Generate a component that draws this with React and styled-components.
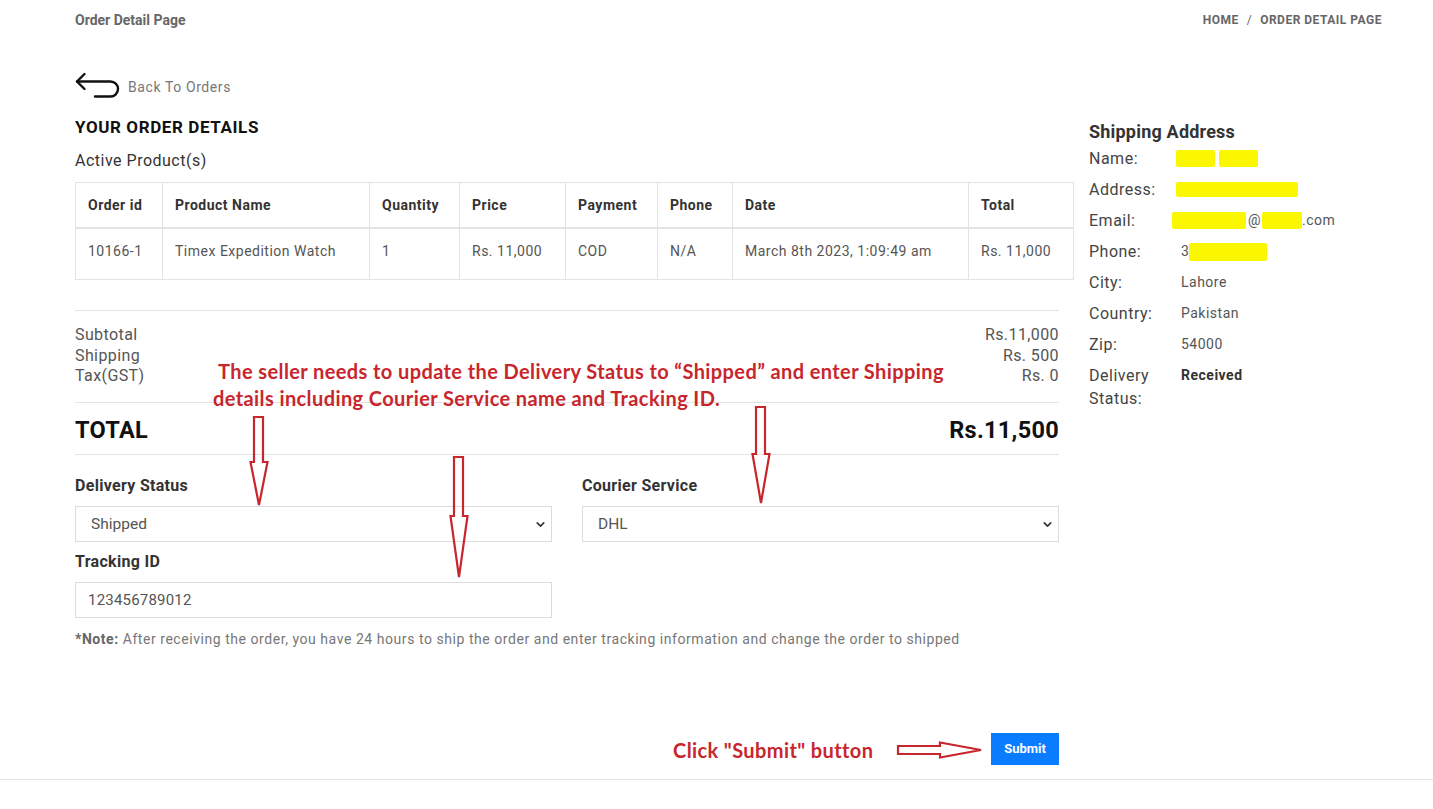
import React from "react";
import styled, { createGlobalStyle } from "styled-components";
import { ChevronDown } from "lucide-react";

const GlobalStyle = createGlobalStyle`
  body {
    margin: 0;
    background: #fff;
    font-family: Roboto, "Liberation Sans", Arial, sans-serif;
    color: #555;
  }
  * { box-sizing: border-box; }
`;

const Page = styled.div`
  position: relative;
  width: 1433px;
  min-height: 809px;
`;

const TopBar = styled.div`
  display: flex;
  justify-content: space-between;
  align-items: center;
  padding: 12px 51px 0 75px;
  height: 28px;
`;

const PageTitle = styled.div`
  font-size: 14px;
  font-weight: 700;
  color: #666;
`;

const Crumbs = styled.div`
  font-size: 12px;
  font-weight: 700;
  color: #666;
  letter-spacing: 0.5px;
  text-transform: uppercase;
  span { margin: 0 8px; font-weight: 400; }
`;

const Body = styled.div`
  padding: 0 0 0 75px;
  border-bottom: 1px solid #e2e2e2;
  padding-bottom: 14px;
`;

const BackLink = styled.a`
  display: flex;
  align-items: center;
  gap: 7px;
  margin-top: 44px;
  height: 27px;
  font-size: 14px;
  letter-spacing: 0.6px;
  color: #777;
  text-decoration: none;
  span { margin-top: 3px; }
`;

const Columns = styled.div`
  display: flex;
  gap: 30px;
  margin-top: 18px;
`;

const LeftCol = styled.div`
  width: 984px;
  display: flex;
  flex-direction: column;
`;

const RightCol = styled.div`
  width: 300px;
  padding-top: 4px;
`;

const Heading = styled.h2`
  margin: 0;
  font-size: 17px;
  line-height: 20px;
  font-weight: 700;
  color: #111;
  letter-spacing: 0.6px;
`;

const SubHeading = styled.div`
  margin-top: 14px;
  font-size: 16px;
  line-height: 20px;
  color: #333;
  letter-spacing: 0.5px;
`;

const Table = styled.table`
  margin-top: 11px;
  width: 998px;
  border-collapse: collapse;
  table-layout: fixed;
  font-size: 14px;

  th, td {
    border: 1px solid #e2e3e6;
    text-align: left;
    line-height: 20px;
    padding: 12px 12px;
    vertical-align: top;
  }
  th {
    font-weight: 700;
    color: #333;
    letter-spacing: 0.5px;
    border-bottom-width: 2px;
  }
  td {
    color: #555;
    letter-spacing: 0.5px;
    padding-bottom: 18px;
  }
`;

const Rule = styled.hr`
  border: 0;
  border-top: 1px solid #e3e3e3;
  margin: ${(p) => p.$top || 0}px 0 0;
  width: 100%;
`;

const Summary = styled.div`
  display: flex;
  justify-content: space-between;
  margin-top: 14px;
  font-size: 16px;
  line-height: 20.5px;
  color: #555;
  letter-spacing: 0.4px;
`;

const Figures = styled.div`
  text-align: right;
`;

const TotalRow = styled.div`
  display: flex;
  justify-content: space-between;
  align-items: center;
  margin-top: 13px;
  height: 28px;
  font-size: 23.5px;
  font-weight: 700;
  color: #111;
  letter-spacing: 0.3px;
`;

const FormGrid = styled.div`
  display: grid;
  grid-template-columns: 477px 477px;
  column-gap: 30px;
  margin-top: 21px;
`;

const Field = styled.div`
  display: flex;
  flex-direction: column;
  margin-bottom: ${(p) => p.$gap || 0}px;
`;

const Label = styled.label`
  font-size: 16px;
  line-height: 20px;
  font-weight: 700;
  color: #333;
  letter-spacing: 0.3px;
  margin-bottom: 10px;
`;

const SelectWrap = styled.div`
  position: relative;
  height: 36px;
  svg {
    position: absolute;
    right: 5px;
    top: 12px;
    pointer-events: none;
  }
`;

const Select = styled.select`
  appearance: none;
  width: 100%;
  height: 36px;
  border: 1px solid #dcdcdc;
  border-radius: 0;
  background: #fff;
  padding: 0 15px;
  font-family: Roboto, sans-serif;
  font-size: 15.5px;
  color: #555;
`;

const Input = styled.input`
  width: 100%;
  height: 36px;
  border: 1px solid #dcdcdc;
  padding: 0 12px;
  font-family: Roboto, sans-serif;
  font-size: 15px;
  color: #555;
  letter-spacing: 0.2px;
`;

const Note = styled.p`
  margin: 13px 0 0;
  font-size: 14px;
  line-height: 16px;
  color: #777;
  letter-spacing: 0.55px;
  b { color: #666; }
`;

const Actions = styled.div`
  display: flex;
  justify-content: flex-end;
  margin-top: 86px;
`;

const SubmitButton = styled.button`
  width: 68px;
  height: 32px;
  border: 0;
  background: #0a7cff;
  color: #fff;
  font-family: Roboto, sans-serif;
  font-size: 13px;
  font-weight: 700;
`;

const AddressTitle = styled.h3`
  margin: 0;
  font-size: 18px;
  line-height: 22px;
  font-weight: 700;
  color: #333;
  letter-spacing: 0.2px;
`;

const InfoRow = styled.div`
  display: grid;
  grid-template-columns: 92px 1fr;
  margin-top: ${(p) => (p.$first ? 4 : 8)}px;
  line-height: 23px;
`;

const InfoLabel = styled.div`
  font-size: 16px;
  color: #444;
  letter-spacing: 0.5px;
`;

const InfoValue = styled.div`
  font-size: 14px;
  color: #555;
  letter-spacing: 0.5px;
  display: flex;
  align-items: ${(p) => (p.$top ? "flex-start" : "center")};
  font-weight: ${(p) => (p.$bold ? 700 : 400)};
  ${(p) => p.$bold && "color: #333;"}
`;

const Marker = styled.span`
  display: inline-block;
  height: ${(p) => p.$h || 17}px;
  width: ${(p) => p.$w}px;
  margin-left: ${(p) => p.$ml || 0}px;
  margin-right: ${(p) => p.$mr || 0}px;
  background: #fbf700;
  border-radius: 2px;
`;

const Callout = styled.div`
  position: absolute;
  left: ${(p) => p.$x}px;
  top: ${(p) => p.$y}px;
  font-family: Lato, "Open Sans", sans-serif;
  font-weight: 700;
  font-size: 20px;
  letter-spacing: 0.4px;
  line-height: 27px;
  color: #c8262d;
  white-space: nowrap;
`;

const Indent = styled.div`
  padding-left: 5px;
`;

const ArrowSvg = styled.svg`
  position: absolute;
  left: ${(p) => p.$x}px;
  top: ${(p) => p.$y}px;
  overflow: visible;
`;

const DownArrow = ({ x, y, len, headAt }) => (
  <ArrowSvg $x={x} $y={y} width="22" height={len} viewBox={`0 0 22 ${len}`}>
    <path
      d={`M6 1 H15 V${headAt} H19.5 L11 ${len - 1} L2.5 ${headAt} H6 Z`}
      fill="none"
      stroke="#c8262d"
      strokeWidth="2.2"
    />
  </ArrowSvg>
);

const RightArrow = ({ x, y }) => (
  <ArrowSvg $x={x} $y={y} width="86" height="18" viewBox="0 0 86 18">
    <path
      d="M1 5 H43 V1.5 L84 9 L43 16.5 V13 H1 Z"
      fill="none"
      stroke="#c8262d"
      strokeWidth="2.2"
    />
  </ArrowSvg>
);

const BackIcon = () => (
  <svg width="46" height="27" viewBox="0 0 46 27" fill="none" stroke="#111" strokeWidth="2.4" strokeLinecap="round">
    <path d="M2 9.5 H35.5 A7.5 7.5 0 0 1 35.5 24.5 H20" />
    <path d="M9.5 2 L2 9.5 L9.5 17" strokeLinejoin="round" />
  </svg>
);

const columns = [
  ["Order id", 87],
  ["Product Name", 207],
  ["Quantity", 90],
  ["Price", 106],
  ["Payment", 92],
  ["Phone", 75],
  ["Date", 236],
  ["Total", 105],
];

const row = ["10166-1", "Timex Expedition Watch", "1", "Rs. 11,000", "COD", "N/A", "March 8th 2023, 1:09:49 am", "Rs. 11,000"];

export default function App() {
  return (
    <Page>
      <GlobalStyle />
      <TopBar>
        <PageTitle>Order Detail Page</PageTitle>
        <Crumbs>
          Home<span>/</span>Order Detail Page
        </Crumbs>
      </TopBar>

      <Body>
        <BackLink href="#">
          <BackIcon />
          <span>Back To Orders</span>
        </BackLink>

        <Columns>
          <LeftCol>
            <Heading>YOUR ORDER DETAILS</Heading>
            <SubHeading>Active Product(s)</SubHeading>
            <Table>
              <colgroup>
                {columns.map(([name, w]) => (
                  <col key={name} style={{ width: w }} />
                ))}
              </colgroup>
              <thead>
                <tr>
                  {columns.map(([name]) => (
                    <th key={name}>{name}</th>
                  ))}
                </tr>
              </thead>
              <tbody>
                <tr>
                  {row.map((v, i) => (
                    <td key={i}>{v}</td>
                  ))}
                </tr>
              </tbody>
            </Table>

            <Rule $top={30} />
            <Summary>
              <div>
                Subtotal
                <br />
                Shipping
                <br />
                Tax(GST)
              </div>
              <Figures>
                Rs.11,000
                <br />
                Rs. 500
                <br />
                Rs. 0
              </Figures>
            </Summary>
            <Rule $top={15} />
            <TotalRow>
              <span>TOTAL</span>
              <span>Rs.11,500</span>
            </TotalRow>
            <Rule $top={10} />

            <FormGrid>
              <Field $gap={10}>
                <Label>Delivery Status</Label>
                <SelectWrap>
                  <Select defaultValue="Shipped">
                    <option>Received</option>
                    <option>Shipped</option>
                    <option>Delivered</option>
                  </Select>
                  <ChevronDown size={13} strokeWidth={3} color="#333" />
                </SelectWrap>
              </Field>
              <Field $gap={10}>
                <Label>Courier Service</Label>
                <SelectWrap>
                  <Select defaultValue="DHL">
                    <option>DHL</option>
                    <option>TCS</option>
                    <option>Leopards</option>
                  </Select>
                  <ChevronDown size={13} strokeWidth={3} color="#333" />
                </SelectWrap>
              </Field>
              <Field>
                <Label>Tracking ID</Label>
                <Input defaultValue="123456789012" />
              </Field>
            </FormGrid>

            <Note>
              <b>*Note:</b> After receiving the order, you have 24 hours to ship the order and enter tracking information and change the order to shipped
            </Note>

            <Actions>
              <SubmitButton>Submit</SubmitButton>
            </Actions>
          </LeftCol>

          <RightCol>
            <AddressTitle>Shipping Address</AddressTitle>
            <InfoRow $first>
              <InfoLabel>Name:</InfoLabel>
              <InfoValue>
                <Marker $w={39} $ml={-5} $mr={4} />
                <Marker $w={39} />
              </InfoValue>
            </InfoRow>
            <InfoRow>
              <InfoLabel>Address:</InfoLabel>
              <InfoValue>
                <Marker $w={122} $ml={-5} $h={15} />
              </InfoValue>
            </InfoRow>
            <InfoRow>
              <InfoLabel>Email:</InfoLabel>
              <InfoValue>
                <Marker $w={74} $ml={-9} $mr={2} />@<Marker $w={40} $ml={1} />.com
              </InfoValue>
            </InfoRow>
            <InfoRow>
              <InfoLabel>Phone:</InfoLabel>
              <InfoValue>
                3<Marker $w={78} $h={18} />
              </InfoValue>
            </InfoRow>
            <InfoRow>
              <InfoLabel>City:</InfoLabel>
              <InfoValue>Lahore</InfoValue>
            </InfoRow>
            <InfoRow>
              <InfoLabel>Country:</InfoLabel>
              <InfoValue>Pakistan</InfoValue>
            </InfoRow>
            <InfoRow>
              <InfoLabel>Zip:</InfoLabel>
              <InfoValue>54000</InfoValue>
            </InfoRow>
            <InfoRow>
              <InfoLabel>
                Delivery
                <br />
                Status:
              </InfoLabel>
              <InfoValue $bold $top>Received</InfoValue>
            </InfoRow>
          </RightCol>
        </Columns>
      </Body>

      <Callout $x={213} $y={358}>
        <Indent>The seller needs to update the Delivery Status to “Shipped” and enter Shipping</Indent>
        <div>details including Courier Service name and Tracking ID.</div>
      </Callout>
      <DownArrow x={248} y={416} len={90} headAt={46} />
      <DownArrow x={448} y={456} len={122} headAt={60} />
      <DownArrow x={750} y={406} len={98} headAt={48} />

      <Callout $x={673} $y={737}>Click "Submit" button</Callout>
      <RightArrow x={897} y={741} />
    </Page>
  );
}
